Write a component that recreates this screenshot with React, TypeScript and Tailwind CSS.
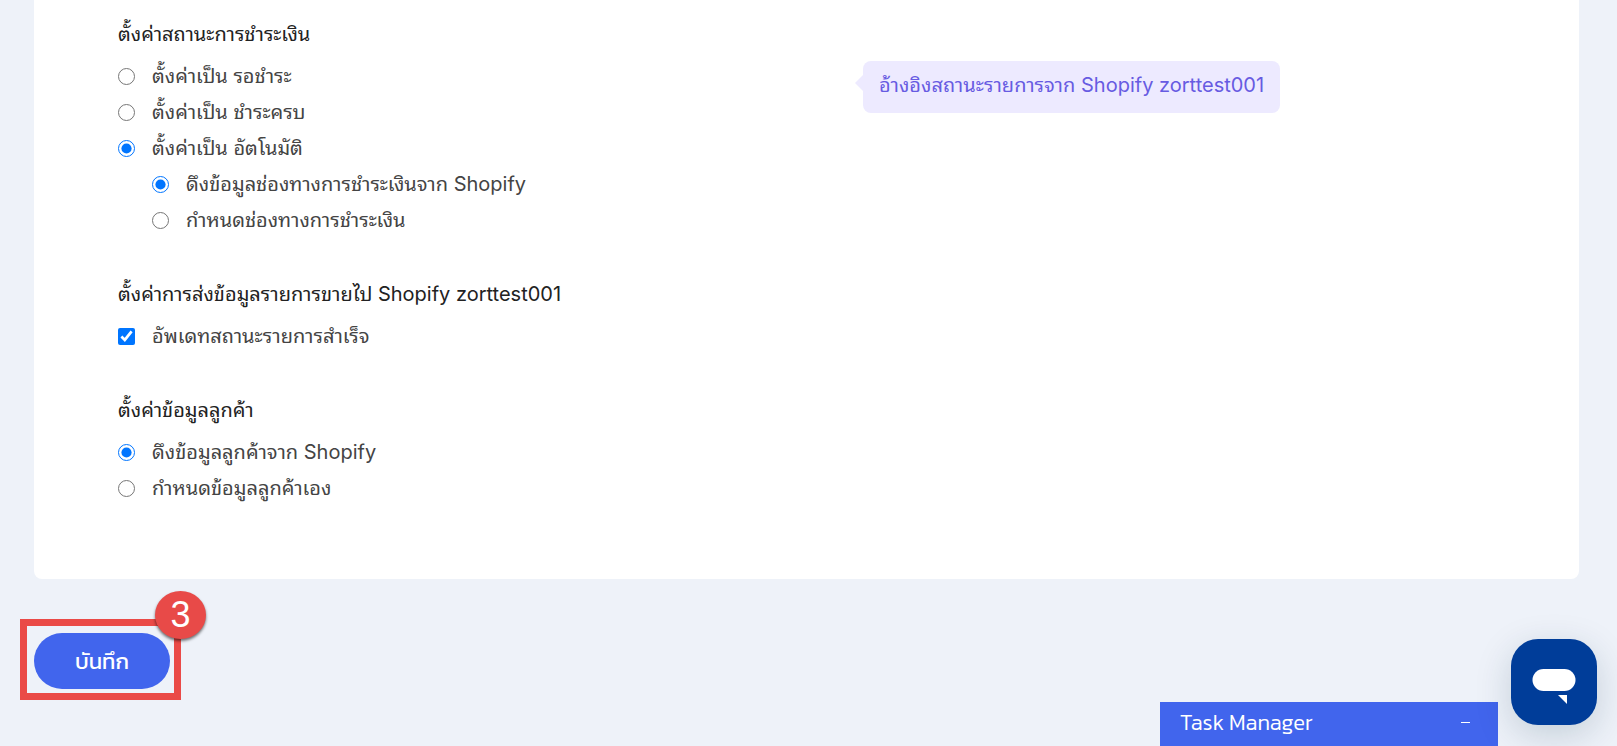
import { useState, type ReactNode } from "react";

const SHOP_NAME = "Shopify zorttest001";

interface Option {
	value: string;
	label: string;
}

const paymentStatusOptions: Option[] = [
	{ value: "pending", label: "ตั้งค่าเป็น รอชำระ" },
	{ value: "paid", label: "ตั้งค่าเป็น ชำระครบ" },
	{ value: "auto", label: "ตั้งค่าเป็น อัตโนมัติ" },
];

const paymentChannelOptions: Option[] = [
	{ value: "shopify", label: "ดึงข้อมูลช่องทางการชำระเงินจาก Shopify" },
	{ value: "custom", label: "กำหนดช่องทางการชำระเงิน" },
];

const customerOptions: Option[] = [
	{ value: "shopify", label: "ดึงข้อมูลลูกค้าจาก Shopify" },
	{ value: "custom", label: "กำหนดข้อมูลลูกค้าเอง" },
];

function SectionTitle({ children }: { children: ReactNode }) {
	return (
		<h2 className="mb-[6px] h-9 text-xl leading-9 font-[420] whitespace-nowrap text-[#222]">
			{children}
		</h2>
	);
}

function RadioGroup({
	name,
	options,
	value,
	onChange,
}: {
	name: string;
	options: Option[];
	value: string;
	onChange: (value: string) => void;
}) {
	return (
		<>
			{options.map((option) => (
				<label
					key={option.value}
					className="flex h-9 items-center gap-[17px] text-xl whitespace-nowrap"
				>
					<input
						type="radio"
						name={name}
						value={option.value}
						checked={value === option.value}
						onChange={(e) => onChange(e.target.value)}
						className="size-[17px] shrink-0 accent-[#0075ff]"
					/>
					{option.label}
				</label>
			))}
		</>
	);
}

function SaveButton() {
	return (
		<div className="relative">
			<button
				type="button"
				className="h-14 w-[136px] rounded-full bg-[#4165ed] font-['Kanit','Noto_Sans_Thai',sans-serif] text-[22px] font-normal text-white"
			>
				บันทึก
			</button>
			{/* Highlight frame and step number */}
			<div className="pointer-events-none absolute -top-[14px] -right-[11px] -bottom-[11px] -left-[14px] border-[7px] border-[#ea4a47]" />
			<div className="absolute -top-[42px] -right-9 flex h-12 w-[51px] items-center justify-center rounded-[50%] bg-[#e84a48] font-['Liberation_Sans',sans-serif] text-4xl font-normal text-white shadow-[0_2px_3px_rgba(0,0,0,0.55)]">
				3
			</div>
		</div>
	);
}

function ChatButton() {
	return (
		<button
			type="button"
			aria-label="Chat"
			className="fixed right-5 bottom-[21px] size-[86px] rounded-[27px] bg-[#003d99] shadow-[0_10px_36px_rgba(0,50,70,0.18)]"
		>
			<svg viewBox="0 0 86 86" className="size-full" fill="#fff">
				<rect x="21.5" y="30" width="43" height="22" rx="11" />
				<path d="M47 56h9v9z" />
			</svg>
		</button>
	);
}

export default function App() {
	const [paymentStatus, setPaymentStatus] = useState("auto");
	const [paymentChannel, setPaymentChannel] = useState("shopify");
	const [updateStatus, setUpdateStatus] = useState(true);
	const [customer, setCustomer] = useState("shopify");

	return (
		<div className="min-h-screen bg-[#eef2f9] pr-[38px] pb-14 pl-[34px] font-['Inter','Noto_Sans_Thai_Looped','Noto_Sans_Thai',sans-serif] font-[380] text-[#444]">
			<main className="flex flex-col gap-[38px] rounded-b-lg bg-white pt-4 pb-[73px] pl-[84px]">
				<section className="flex items-start">
					<div className="w-[51%]">
						<SectionTitle>ตั้งค่าสถานะการชำระเงิน</SectionTitle>
						<RadioGroup
							name="paymentStatus"
							options={paymentStatusOptions}
							value={paymentStatus}
							onChange={setPaymentStatus}
						/>
						<div className="pl-[34px]">
							<RadioGroup
								name="paymentChannel"
								options={paymentChannelOptions}
								value={paymentChannel}
								onChange={setPaymentChannel}
							/>
						</div>
					</div>
					<div className="relative mt-[45px] h-[52px] rounded-lg bg-[#edeaff] px-4 text-xl leading-12 whitespace-nowrap text-[#675be2]">
						<span className="absolute top-[14px] -left-2 border-y-8 border-r-8 border-y-transparent border-r-[#edeaff]" />
						อ้างอิงสถานะรายการจาก {SHOP_NAME}
					</div>
				</section>

				<section>
					<SectionTitle>ตั้งค่าการส่งข้อมูลรายการขายไป {SHOP_NAME}</SectionTitle>
					<label className="flex h-9 items-center gap-[17px] text-xl whitespace-nowrap">
						<input
							type="checkbox"
							checked={updateStatus}
							onChange={(e) => setUpdateStatus(e.target.checked)}
							className="size-[17px] shrink-0 accent-[#0075ff]"
						/>
						อัพเดทสถานะรายการสำเร็จ
					</label>
				</section>

				<section>
					<SectionTitle>ตั้งค่าข้อมูลลูกค้า</SectionTitle>
					<RadioGroup
						name="customer"
						options={customerOptions}
						value={customer}
						onChange={setCustomer}
					/>
				</section>
			</main>

			<div className="mt-[54px] flex">
				<SaveButton />
			</div>

			<div className="fixed right-[119px] bottom-0 flex h-11 w-[338px] items-center justify-between bg-[#4165ed] pr-7 pb-1 pl-5 font-['Kanit','Noto_Sans',sans-serif] text-[22px] font-light text-white">
				<span>Task Manager</span>
				<button type="button" aria-label="Minimize" className="h-6 w-[9px]">
					<span className="block h-px w-full bg-white" />
				</button>
			</div>
			<ChatButton />
		</div>
	);
}
